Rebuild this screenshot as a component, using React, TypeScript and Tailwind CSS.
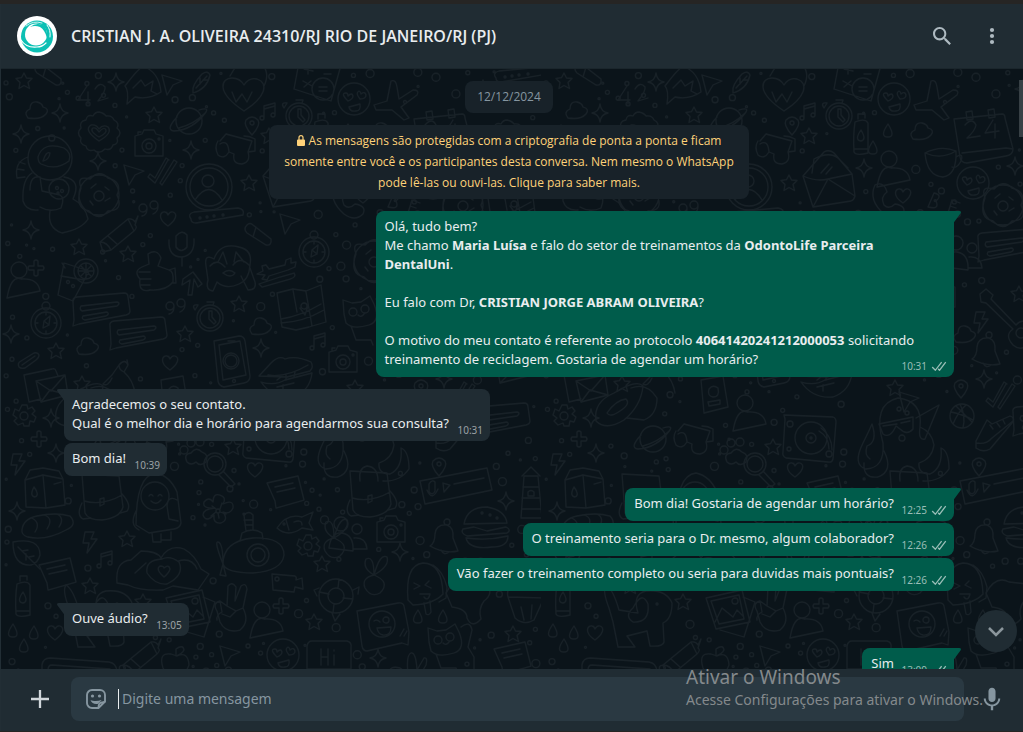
import type { ReactNode } from 'react'

// A circle as a path fragment
const c = (x: number, y: number, r: number) =>
  `M${x - r} ${y}a${r} ${r} 0 1 0 ${2 * r} 0a${r} ${r} 0 1 0 ${-2 * r} 0`

// Wallpaper drawings, each centred on 0,0
const shapes: Record<string, string> = {
  star: 'M0-8l2.500 5 5.500.5-4 4 1.500 6-5.500-3-5 3 1-6-4-4 5.500-.8z',
  sparkle: 'M0-9q1 8 8 9q-7 1-8 9q-1-8-8-9q7-1 8-9z',
  heart: 'M0 7C-12-1-7-8-3-7Q-1-7 0-4Q2-8 5-7C10-5 8 1 0 7z',
  bigHeart: 'M0 17C-30-3-22-16-12-16Q-4-16 0-9Q5-17 13-15C25-11 22 3 0 17zM-14-18Q0-44 16-32Q27-22 20-8',
  cloud: 'M-8 8Q-13 2-6-1Q-6-9 1-8Q6-7 7-3Q14-1 10 4Q5 10-8 8z',
  bolt: 'M-4-10H5L2-3H8L-2 11L0 1H-6z',
  drop: 'M0-7Q-9 6 0 6Q8 6 0-7z',
  cross: 'M-2-7Q0-9 2-7L2-2 7-2Q9 0 7 2H2V7Q0 9-2 7V2H-7Q-9 0-7-2H-2z',
  quotes: c(-5, -1, 4) + 'M-1 0Q-1 6-6 7' + c(6, -4, 4) + 'M10-3Q10 3 5 5',
  notes: 'M-5 6V-6L6-9V3M-5-3L6-6' + c(-7, 6, 2) + c(4, 3, 2),
  pin: 'M0 10Q-9 0-6-5Q0-11 6-5Q9 0 0 10z' + c(0, -2, 2),
  arrow: 'M-9-8L11-2L2 2L-4 12z',
  checks: 'M-14 5L-7 11L6-12M-14 5l2-3 5 4 11-20 3 2M-2 11L0 13 15-10 12-12z',
  pill: 'M-12-10Q-16-6-12-2L7 10Q13 11 12 4L-6-10Q-9-13-12-10zM-3-8L-6 2',
  feather: 'M-9 8Q-10 2 0-9Q6-13 8-8Q5 6-9 10zM-6 5L5-7M-2 1L-2-5M1-3L6-3',
  wing: 'M-16 18Q-14 4-18 0Q-6-16 0-20Q16-14 18 6Q6 14-8 11zM-10 2L-2-6L2 0L10-5L8 5L14 8',
  plane: 'M0-18Q5-20 6-12L8 0L22-9Q29-9 26-4L10 8L18 19L13 21L1 11L-15 11L-17 6L-4 2z' + c(14, 3, 1.5),
  planet: c(0, 0, 13) + 'M-12-4Q-24 9-15 10Q4 9 17-9Q20-14 10-11M-10 7Q5 3 15-7',
  camera: 'M-14-9L-7-11L-5-15H5L7-11L14-9V11H-14zM-11-10V-13H-8' + c(0, 1, 7) + c(0, 1, 3) + c(10, -6, 1),
  alarm: c(0, 0, 13) + c(0, 0, 10) + 'M-1-7L-1 1L4 6L6 4L2-1L2-7zM-3-16H4L3-13M-12-13L-15-8Q-19-14-12-13z',
  badge: 'M0-21Q5-20 7-17Q13-18 15-13Q21-10 18-5Q24 0 18 5Q20 11 14 12Q12 18 6 16Q0 22-5 17Q-12 19-13 13Q-20 11-18 5Q-23 0-18-5Q-20-12-13-13Q-12-19-6-17Q-4-21 0-21zM0 8Q-16-3-8-8Q-3-9 0-4Q4-9 9-6Q14 0 0 8zM0 4Q-10-2-6-5Q-3-6 0-1Q5-7 7-3Q8 0 0 4z',
  glasses: 'M-18-8Q-22-2-18 6Q-12 11-7 3L-2 5Q-4 15 6 15Q15 13 12 3L19 2V-10Q14-13 8-13M-16-5Q-8-10-7 3M12 3L16-8L-10-15L-16-8',
  bottle: 'M-6-13Q-8 0-7 17Q-5 21 7 18V-12Q4-17-6-13zM-3-16V-21H4V-17M0-5Q-7 5 0 6Q6 5 0-5zM-7 14H7',
  cup: 'M-16-9Q0-17 15-11Q16 13 2 15Q-14 14-16-9zM-16-9Q0-2 15-11M15-5Q23-10 20-1Q16 7 11 5',
  envelope: 'M-26 0L-5-24Q0-27 5-23L23-2L26 20Q25 24 22 25L-16 31zM-26 0Q-12 6-1 3L23-2M-16 31L-1 3L26 20M-17-3L-15-17Q0-25 9-18L19-8M-8-3L0-12M-3-2L3-9',
  letter: 'M-16-10L11-14L16 7L-12 14zM-16-10L3 3L11-14M-12 14L0 2L16 7',
  profile: c(0, 0, 23) + c(0, 0, 19) + c(-1, -6, 6) + 'M-14 13Q0-8 13 13',
  astronaut: c(0, -35, 22) + 'M-12-36Q-7-52 14-45Q22-40 19-32Q6-22-9-29Q-12-31-12-36zM-7-32Q-4-42 0-40Q-1-33-7-32M-18-20Q-28-14-27 8Q-24 18-12 17M-20-3Q-20-18-10-16L-8-2L10 2Q15 5 11 15Q0 20-10 14M14-16Q32-13 23 6Q35 12 38 26Q32 36 12 40Q-3 35 0 18M-22-36Q-36-31-33-15L-25-16M-31-31l6 2M-33-24l7 1' + c(9, -4, 10) + c(7, -5, 1.5) + c(12, -2, 1.5) + c(8, 0, 1),
  donut: c(0, 0, 20) + 'M-18-7Q-23-20-9-16Q0-26 9-17Q24-13 18 0Q25 16 9 16Q0 27-10 16Q-25 13-18-7zM-8-7l5-4M6-8l4 3M-9 6l3 4M6 6l5-3' + c(0, 1, 5),
  phoneCall: 'M-12-18Q-3-22 0-11Q-7-6-3 2Q2 7 8 1Q20 3 16 11Q8 19-3 11Q-19-3-12-18z',
  stick: 'M-25 2Q-29-3-22-5L22-9Q29-8 27-2L-20 6Q-25 6-25 2z' + c(-16, 1, 1) + c(-9, 0, 1) + c(-2, -1, 1) + c(7, -2, 1),
  pencil: 'M-17 17L-20 7L8-16Q13-17 15-13L18-19L15-10Q18-8 14-4L-9 15zM-20 7Q-13 7-9 15M-12 1L-3 9M8-16L14-4',
  micro: 'M-5-11V0Q0 7 6 0V-12Q1-18-5-11zM-12-7Q-13 10 1 10Q14 8 13-8M1 10V19',
  thumb: 'M-5-17Q4-23 8-13L5-5L16-1Q21 0 20 11Q13 20-3 19Q-15 22-13 8Q-20 0-11-4L-4-7zM-13 8H-2M-14 1H-3M-12 14H-3M16-1L22-3L23 12H20',
  arrowUp: 'M-4 12L-2-3L-10 2L-9-4L1-11L10 1L6 4L2-4L0 12z',
  monkey: 'M-15-11Q-9-28 10-23Q24-20 21-5Q20 10 10 14Q-3 20-12 12L-16 21Q-24 20-21 10L-23-4Q-25-17-15-11zM-19-4Q-12-12-4-3M4-5Q11-14 20-5M-11-8L-6-18L-2-6M5-8L7-18L15-8M-6 3Q0-2 6 3Q2 9-6 3M12 6L19 20Q28 20 26 12L21-2',
  wrench: 'M-19 5L-13 2L-14-3L-10-4L-7 0L9-4L10-9L15-11V-6L20-7L19-2L12 1L-7 7L-9 11L-14 10L-11 6zM-17 15L4 8L18 4Q21 8 14 10L-14 18z',
  person: c(-4, -12, 8) + 'M-16 16Q-12-7-2-3Q15-4 17 9z',
  drink: 'M-13-17L-19 15L-4 21L12-9zM-16-4L7 0M-15-17L-12-12' + c(-9, 2, 1.5) + c(-4, 6, 1.5) + c(9, -9, 12) + c(9, -9, 8) + 'M2-9H16M9-16V-2M4-14L14-4M14-14L4-4',
  map: 'M-24-15L-8-19L5-17L20-23L25 14L8 19L-5 22L-19 19zM-20 11Q0 8 20-4M-20 15Q2 14 23 2' + c(3, -2, 3) + 'M-1 0L4 7L7-2M-8-18L-4 4M5-16L11 18',
  compass: c(0, 0, 15) + c(0, 0, 11) + c(0, -17, 4) + 'M-3 5L-2-2L4-7L3 2zM-2-2L3 2M0-11V-8M0 11V8M-11 0H-8M11 0H8',
  speech: 'M-28-9Q-29-13-24-14L23-18Q27-18 27-14L29 0Q29 3 25 4L-22 13L-28 15L-27 9zM-20-5L16-9Q20-8 16-5L-19 0Q-22-2-20-5zM-18 5L6 1Q9 3 5 5L-16 9Q-20 8-18 5z',
  phone: 'M-17-20L8-25Q13-25 14-20L19 15Q19 21 13 22L-7 26Q-12 25-13 20zM-12-16L9-20L15 14L-8 19zM-3-20H4' + c(0, 0, 8) + c(0, 0, 6) + c(3, 20, 1.5),
  lips: 'M-27 5L-15-8Q-7-16-1-12Q10-16 25-9Q28-4 24 0L1 6zM-25 11Q-11 15-1 9L26 2Q24 20 7 26Q-13 28-25 11zM-18 4Q0 7 22-6M-9 9L-5 6M0 9V4M8 6L9 1M-9 16L8 12M-3 20V14',
  clip: 'M-10 7Q-12 3-8 1L5-7Q9-8 10-5Q10-2 7 0L-4 8Q-8 9-10 7zM-7 5L6-4',
  trumpet: 'M-16 11L-7 2L0-8Q6-15 9-8L5-1Q14 7 16 20M-16 11Q-11 14-7 5M9-8L8-13M0-8Q0-3 5-1',
  letters: 'M-21-11L7-17Q10-18 11-15L13-10M-21-11L-16 16L-4 13M-9-5L20-11L23 9L-4 16zM-9-5L6 5L20-11M-4 16L5 4L23 9',
  gear: 'M-2-11H3L4-7L8-9L11-5L8-2L12 1L10 6L6 5L5 10H0L-1 7L-6 9L-10 5L-7 2L-11-1L-9-7L-5-5z' + c(0, 0, 4),
  card: 'M-12-14L10-18L15 13L-9 19zM-4-5Q0-10 5-6Q7 3 0 3Q-6 2-4-5zM-5 8L7 6V10L-4 12z',
  turntable: 'M-25-21L24-19Q27-18 27-14L24 23Q23 27 19 26L-23 22Q-27 20-26 16L-24-17z' + c(2, 2, 16) + c(2, 2, 5) + c(2, 2, 1) + c(-19, -12, 3) + c(-20, 13, 2) + 'M10-5Q20 1 20 13M12-8Q23 0 23 14' + c(20, 18, 3),
  octopus: 'M-15 10Q-26-29 0-35Q25-32 22-6Q20 8 27 6L41-28L18-15M-15 10Q-13 35-32 36Q-46 32-35 10Q-29-2-26-9Q-20 9-31 13Q-34 22-28 26M22-6Q34-1 36 12Q34 26 21 30Q20 41 32 41Q45 35 43 15Q51 18 51 36Q42 49 25 48M-14 18Q-4 38-20 44Q-35 46-34 30M2 48Q0 35 9 33Q20 34 20 48M-19-9L15-16V-4Q9 3 2-4L-2-7Q-8 6-15 1zM-15-7L-1-9M3-10L12-12' + c(4, 5, 3) + c(1, -24, 2) + c(9, -20, 2),
  ball: c(0, 0, 12) + 'M-11-4Q0-2 11 4M-2-12Q4 0 1 12M-9 8Q-4-4 4-11M-6-10Q3-1 10 6',
  shoe: 'M-18 9L-7-12L-2-8L16-16Q22-14 18-9L-4 17Q-11 21-18 16zM-18 11Q-8 13-2 6L19-11M-4-7L-1-3M3-9L6-5M9-12L11-8',
  paw: 'M-9 8Q-13 0-5-1Q0-8 6-2Q13 0 10 8Q4 13 0 8Q-5 12-9 8z' + c(-12, -4, 4) + c(-5, -11, 4) + c(4, -12, 4),
  magnifier: c(0, 0, 11) + c(0, 0, 8) + 'M8 7L20 20L16 23L4 11',
  carton: 'M-16-8L2-13L22-9L24 17L5 20L-15 19zM2-13L5 20M-16-8L-11-18L2-20L18-17L22-9M13-4L20-6M-7-1Q-12 8-6 9Q-1 7-7-1z',
  bread: 'M-24 5Q-23-6-9-9Q10-13 24-9Q32 0 20 5Q0 16-18 12Q-25 10-24 5zM-14-7Q-5-2-11 7M-2-10Q8-7 1 4M11-11Q19-7 13 2',
  backpack: 'M-21-28L-18 11Q-15 18-1 18Q17 16 20 5L16-26zM-19-1Q0 4 19-7M-21 1Q-27 13-20 17L-12 16M19-8Q29 3 24 9L17 11M-3-3V4L1 2V-4z',
  penguin: 'M-20 23Q-20-27 0-29Q14-26 21-10L25 21Q24 26 18 27L-7 31zM-20 9Q-27 23-17 28M21-2Q12-7 11 4L13 17L22 19M-4 31L-3 40H5V32M5 38H15V30' + c(-1, -6, 14) + 'M-7-6Q-5-9-3-6M2-6Q4-9 6-6M-5-1Q0 4 5-2',
  flower: 'M-3-3Q-16-2-14-9Q-9-15-5-9Q-5-18 2-16Q9-14 5-7Q16-12 15-3Q12 4 5 1Q11 9 3 12Q-5 13-4 4Q-12 12-15 4Q-15-2-3-3z' + c(0, 0, 2) + 'M-2-2L-6-5M2-2L4-8M2 1L8 3M0 2L1 7M-2 1L-7 5',
  note: 'M-18-9L13-16L19 8L-9 16L-10 9zM-10-5L8-9M-8 0L10-4',
  fish: 'M-17 5Q-7-10 8-6L19-11L15 0L19 7L8 5Q-6 15-17 5zM-8-3L-5 7' + c(-10, 1, 1) + 'M0-1Q8-4 8 2',
  submarine: 'M-30 9Q-30-14 0-17Q31-18 31 0Q29 16 0 18Q-27 18-30 9zM-13-14L-11-22Q0-28 9-22L10-16M-7-24L-9-40Q-4-45 0-40V-25M-9-35H0M-8-30H0' + c(5, 0, 11) + c(5, 0, 7) + 'M-30 9Q-39-14-35-13Q-30-12-30 9M-30 9L-33 20L-27 21z',
  sprout: 'M0 2Q-12-5-8-14Q0-18 0 2Q6-20 13-16Q16-7 0 2M0 2Q-13 5-9 15Q-3 25 6 20Q17 9 0 2z',
  voice: 'M-36-8L31-21L36 1L-31 15zM-27-5V3Q-23 7-21 2V-7Q-24-10-27-5zM-29 1Q-24 13-18 0M-13-6L-6-4L-12 3zM-2-5L28-11',
  bell: 'M-14 8Q-9 5-9-4Q-8-14 3-13Q10-11 9 0L14 13Q0 16-14 8zM-3 12Q0 18 5 14' + c(3, -16, 3),
  burger: 'M-23-4Q-20-21 0-21Q18-18 20-5zM-24 1L-13-1L0 3L19-1Q25 2 20 5L-20 8Q-27 5-24 1zM-21 10Q0 13 21 8Q21 19 5 19Q-18 22-21 10' + c(-5, -15, 1) + c(3, -13, 1) + c(10, -10, 1),
  lighthouse: 'M-10 21L-7-21H7L11 21zM-8-10H7M-9 1H9M-9 12H10M-3-1V-5Q0-8 3-5V-1zM-9-21L0-30L9-21',
  leaf: 'M-13-12Q14-17 14 1Q12 9 5 11Q-13 12-13-12zM-8-7L14 15M-4-3L2-4M0 0L0 6M3 3L8 2',
  hands: 'M-47 18Q-49-4-33-5L-23-14Q-7-14-3-7Q5-21 20-16Q31-10 37 4L45 9L34 25L9 21L-1 25Q-24 26-36 20zM-2-6Q-19-5-17 8Q-9 20 3 19Q21 10 15-3Q6-10-2-6M-18-2L-29 8M14-4Q28-8 33 4M0 12Q-9 4-4 1Q0 1 0 3Q5-1 6 4Q5 8 0 12z',
  icepop: 'M-17 13Q-20-22-2-24Q17-24 18 7Q9 17-12 18zM8-22Q18-16 22 0L21 11L14 15M-1 16L1 27Q4 29 6 25L5 14M-11-4L-5-1L-11 2M4-6L0-2L6 1M-5 7H5Q3 15-1 10',
  blanket: 'M-23-8Q-13-26 0-19L18-17Q25-7 15 0Q9 8 12 18Q3 28-2 17Q-2 8-17 6z',
  cupcake: 'M-18-7L-11 14Q-2 22 8 16L18-6zM-18-7Q-21-20-5-20Q8-29 16-16Q24-9 18-6M-5 3L-2 16M6 1L5 15',
  victory: 'M-14 3Q-19-5-11-7L-4-2L-3-22Q1-27 5-21L4-7L10-22Q15-26 16-19L12 0Q19 14 9 22Q-5 26-11 14zM-11-7L-9 4Q-15 7-14 12M-4-2L5 3L-1 9L-9 6M5 3L12 0',
  video: 'M-15-10L8-8Q10-7 9-4L15-6L16 5L8 3L7 8L-14 6z' + c(-10, -5, 2),
  float: c(0, 0, 17) + c(0, 0, 8) + 'M-17-4L-7-2M17 3L7 2M-3 17L-2 8M3-17L2-8M-17-8L-22-6L-19 0M17-6L23-9L22-2M-4 17L-1 25L4 18',
  picture: 'M-24-11L12-19L20 13L-14 20zM-19-8L9-14L14 10L-11 15zM-15 13L-8-1L3 8L7 1L13 7M13-12L25-7L14 28L-10 21' + c(5, -8, 3),
  squareFace: 'M-26-13L15-21Q20-22 21-18L26 8L25 21L19 19L-16 27Q-20 27-21 22z' + c(-1, 0, 13) + c(3, -4, 3) + 'M-9-3Q-6-5-3-2M-6 4L8 3Q8 12 0 11Q-5 10-6 4M17 12L21 5M21 12L24 7',
  cat: 'M-17-2L-18-16L-9-13L0-14L9-20L13-12Q20 5 8 9Q-8 14-15 7zM15-17Q24-24 26-14L22 3L28 13V29M-10 10L-5 24H10L12 29' + c(-8, -4, 4) + c(4, -7, 4) + 'M-3-1Q0 2 3-2',
  face: c(0, 0, 16) + 'M-6 2Q-14-6-8-6Q-6-6-6-3Q-2-7-1-3Q-1 0-6 2M6 0Q1-6 5-8Q7-7 7-5Q11-8 12-4Q12 0 6 0M-5 8L6 5Q7 12 2 12Q-4 13-5 8z',
  hi: 'M-22-9Q-21-14-17-14H18Q23-13 22-7V14H-22z',
  fingers: 'M-27 12Q-27 3-16 6L-8 12Q-10-7-5-9Q0-10 1 8L8-4Q12-5 10 3L3 15',
  apple: 'M-12 7Q-17-9-4-7L2-5Q13-10 14 4Q9 17 2 14Q-8 16-12 7zM1-5L1-12Q8-17 9-11Q7-7 1-5',
  crate: 'M-37 10V-3Q-36-10-29-10L30-6Q37-5 38 3V10M-31 10V2Q-31-3-27-3L31 1V10',
  dog: 'M-34-4Q-41-22-37-27Q-30-23-24-2L-5 1Q-11-18 3-21Q23-23 29-9Q29 7 20 11L21 30Q20 35 7 34L4 19L-16 24L-8 35H-25L-30 10zM-10-4Q-19 4-10 10Q7 11 5-8Q-1-22-10-4' + c(14, -8, 1),
  calendar: 'M-27-14L21-19Q24-19 24-15L32 16Q32 22 25 23L-14 30Q-20 30-21 24zM-19 20L25 15L32 16M-15-21L-9-22L-8-14L-14-13zM7-23L13-24L14-16L8-15z',
  pad: 'M-16-22L25-14L15 22L-22 10zM-12-10L-3-8M-8-14L-8-5M-13 2L-4 7M-5 2L-12 8M8-5H15' + c(7, 10, 11) + 'M3 8H11M3 12H11',
  guitar: 'M-21-22L-15-27L-8-21L-10-17L15 9Q21 2 28 8L32 25Q21 37 12 29Q3 19 12 13L-15-13L-20-14z' + c(20, 17, 5),
  folks: c(-8, -12, 7) + c(8, -7, 5) + 'M-20 12Q-18-4-7-3Q5-1 4 15zM5 2Q17 1 18 13H4',
  ufo: 'M-28 15Q-31-4-10-13Q13-27 19-20Q17 0 0 14Q-18 25-28 15zM-17 7Q-8-6 2-7Q7-2-4 5Q-14 12-17 7zM7-18Q23-24 33-8Q33 9 20 14L3 12',
}

type Doodle = [name: string, x: number, y: number, room?: number]

const doodles: Doodle[] = [
  ['star', 23, 80], ['pill', 48, 74], ['sparkle', 115, 81], ['wing', 142, 85, 24], ['arrow', 170, 82], ['feather', 201, 82],
  ['bigHeart', 243, 93, 28], ['pad', 315, 78, 28], ['face', 353, 98, 20], ['plane', 390, 98, 28], ['calendar', 440, 132, 36],
  ['sparkle', 482, 88], ['stick', 520, 75, 20], ['cloud', 35, 109], ['sparkle', 59, 112], ['badge', 98, 132, 26], ['star', 153, 114],
  ['planet', 188, 120, 20], ['camera', 148, 144, 20], ['sparkle', 190, 149], ['notes', 268, 111], ['alarm', 298, 115, 20], ['pin', 251, 124],
  ['glasses', 235, 148, 24], ['star', 268, 135], ['bottle', 320, 134, 20], ['drop', 347, 130], ['drop', 332, 147], ['cloud', 380, 130],
  ['cup', 400, 161, 22], ['sparkle', 20, 133], ['sparkle', 97, 160], ['astronaut', 49, 192, 48], ['donut', 98, 194, 26], ['arrow', 132, 172],
  ['checks', 161, 171, 18], ['profile', 208, 186, 26], ['star', 248, 182], ['envelope', 288, 175, 34], ['sparkle', 323, 167],
  ['person', 352, 170, 18], ['phoneCall', 346, 202, 20], ['heart', 362, 195], ['face', 432, 182, 20], ['donut', 462, 204, 24],
  ['sparkle', 474, 165], ['quotes', 147, 208], ['heart', 167, 218], ['pencil', 119, 234, 22], ['stick', 215, 216, 28], ['arrow', 288, 221],
  ['pill', 258, 234], ['sparkle', 30, 229], ['badge', 506, 140, 26], ['map', 510, 205, 28], ['speech', 465, 246, 28], ['folks', 423, 254, 20],
  ['micro', 180, 246, 20], ['thumb', 152, 270, 25], ['arrowUp', 191, 282], ['monkey', 228, 269, 28], ['compass', 313, 251, 20],
  ['wrench', 275, 268, 22], ['person', 22, 281, 20], ['cross', 35, 267], ['drink', 76, 279, 25], ['map', 300, 307, 28], ['star', 78, 246],
  ['star', 127, 253], ['guitar', 460, 315, 34], ['bolt', 439, 321], ['bell', 445, 350, 18], ['cloud', 423, 333], ['star', 478, 293],
  ['donut', 373, 260, 24], ['cat', 360, 315, 26], ['drink', 510, 290, 28], ['camera', 400, 295, 20], ['compass', 45, 322, 20],
  ['speech', 100, 310, 30], ['speech', 137, 334, 32], ['quotes', 174, 306], ['star', 238, 303], ['alarm', 209, 317, 20],
  ['cloud', 259, 325], ['star', 184, 333], ['phone', 230, 360, 28], ['lips', 285, 370, 32], ['sparkle', 260, 347], ['sparkle', 10, 333],
  ['cloud', 86, 345], ['star', 55, 350], ['clip', 28, 359], ['heart', 169, 362], ['trumpet', 118, 372, 20], ['letters', 44, 385, 26],
  ['star', 81, 383], ['gear', 23, 415], ['sparkle', 50, 417], ['notes', 318, 341], ['camera', 342, 360, 20], ['card', 172, 393, 20],
  ['ufo', 83, 405, 36], ['person', 208, 414, 20], ['turntable', 268, 435, 32], ['octopus', 357, 432, 54], ['ball', 421, 415, 16],
  ['pin', 420, 387], ['checks', 459, 395, 18], ['arrow', 367, 399], ['shoe', 453, 431, 22], ['star', 354, 387], ['sparkle', 443, 378],
  ['pin', 438, 465], ['glasses', 153, 438, 24], ['letter', 511, 368, 20], ['speech', 500, 420, 30], ['planet', 112, 438, 20],
  ['cross', 38, 438], ['bolt', 16, 463], ['sparkle', 55, 452], ['paw', 195, 453], ['magnifier', 214, 463, 16], ['carton', 40, 487, 26],
  ['bread', 45, 524, 28], ['backpack', 102, 501, 28], ['penguin', 155, 501, 34], ['flower', 217, 510, 18], ['note', 284, 491, 20],
  ['fish', 293, 522, 20], ['submarine', 252, 554, 40], ['gear', 307, 545], ['sprout', 333, 535], ['heart', 254, 469],
  ['star', 232, 446], ['voice', 455, 488, 38], ['camera', 390, 530, 20], ['bell', 443, 537, 20], ['burger', 486, 527, 26],
  ['sparkle', 505, 500], ['lighthouse', 530, 496, 24], ['folks', 348, 535, 20], ['backpack', 370, 498, 28], ['leaf', 25, 553, 18],
  ['sparkle', 16, 510], ['bolt', 88, 541], ['star', 126, 538], ['notes', 105, 559], ['hands', 163, 564, 48], ['note', 56, 573, 20],
  ['bottle', 22, 596, 22], ['star', 89, 585], ['dog', 102, 611, 40], ['sprout', 373, 572, 20], ['sparkle', 399, 551],
  ['icepop', 424, 586, 28], ['blanket', 468, 600, 26], ['cupcake', 525, 603, 24], ['victory', 230, 607, 24], ['person', 265, 621, 20],
  ['cross', 280, 605], ['video', 286, 583, 18], ['float', 335, 595, 24], ['star', 313, 621], ['star', 321, 563], ['picture', 189, 608, 32],
  ['star', 142, 601], ['squareFace', 382, 623, 30], ['drop', 417, 616], ['drop', 442, 616], ['cat', 445, 643, 26], ['star', 512, 633],
  ['note', 511, 657, 20], ['heart', 54, 632], ['drop', 12, 630], ['drop', 33, 632], ['drop', 23, 645], ['face', 282, 654, 20],
  ['hi', 328, 654, 24], ['sparkle', 377, 657], ['fingers', 415, 661, 24], ['pencil', 142, 657, 20], ['apple', 174, 660, 16],
  ['arrow', 228, 653], ['crate', 78, 667, 36],
]

const TILE_W = 540
const TILE_H = 700

// Small rings in the room that the drawings leave free
function scatterRings() {
  let seed = 7
  const random = () => {
    seed = (seed * 16807) % 2147483647
    return seed / 2147483647
  }
  const rings: number[][] = []
  for (let i = 0; i < 2600; i++) {
    const x = 5 + random() * (TILE_W - 10)
    const y = 70 + random() * (TILE_H - 80)
    const r = [1, 2, 2, 3, 4][Math.floor(random() * 5)]
    const free =
      doodles.every(([, dx, dy, room = 13]) => Math.hypot(dx - x, dy - y) > room + r) &&
      rings.every(([rx, ry, rr]) => Math.hypot(rx - x, ry - y) > rr + r + 6)
    if (free) rings.push([x, y, r])
  }
  return rings
}

const rings = scatterRings()

function Wallpaper() {
  return (
    <svg aria-hidden="true" className="absolute inset-0 h-full w-full" fill="none">
      <defs>
        <pattern id="doodles" y={-68} width={TILE_W} height={TILE_H} patternUnits="userSpaceOnUse">
          <g stroke="#182127" strokeWidth="1.300" strokeLinejoin="round" strokeLinecap="round">
            {doodles.map(([name, x, y], i) => (
              <path key={i} d={shapes[name]} transform={`translate(${x} ${y})`} />
            ))}
            {rings.map(([x, y, r], i) => (
              <circle key={i} cx={x} cy={y} r={r} />
            ))}
            {/* 42, W, 24, BFF and Hi */}
            <path d="M86 85l-9 14h12M87 91v12M94 88q5-8 10-2q1 4-7 14l10-3M231 91l4 10 6-8 5 8 5-10M424 124q7-8 11 0q-1 6-9 13l13-2M452 119l-8 13 14-2M454 123v14M393 192l-6 14q12 3 8-6q7-6-2-8M407 212l4-13 8 3M409 205l6 2M320 648v16M327 648v16M320 656h7M333 654v10M333 649v1" />
          </g>
        </pattern>
      </defs>
      <rect width="100%" height="100%" fill="url(#doodles)" />
    </svg>
  )
}

function DoubleCheck() {
  return (
    <svg viewBox="0 0 16 15" className="h-[15px] w-4" fill="currentColor" aria-hidden="true">
      <path d="M15.010 3.316l-.478-.372a.365.365 0 0 0-.51.063L8.666 9.879a.32.32 0 0 1-.484.033l-.358-.325a.319.319 0 0 0-.484.032l-.378.483a.418.418 0 0 0 .036.541l1.320 1.266c.143.14.361.125.484-.033l6.272-8.048a.366.366 0 0 0-.064-.512zm-4.100 0l-.478-.372a.365.365 0 0 0-.51.063L4.566 9.879a.32.32 0 0 1-.484.033L1.891 7.769a.366.366 0 0 0-.515.006l-.423.433a.364.364 0 0 0 .006.514l3.258 3.185c.143.14.361.125.484-.033l6.272-8.048a.365.365 0 0 0-.063-.51z" />
    </svg>
  )
}

interface BubbleProps {
  time: string
  out?: boolean
  first?: boolean
  children: ReactNode
}

function Bubble({ time, out, first, children }: BubbleProps) {
  return (
    <div className={`flex ${out ? 'justify-end' : 'justify-start'} ${first ? 'mt-3' : 'mt-0.5'}`}>
      <div
        className={`relative max-w-[65%] rounded-lg pt-1.5 pr-[7px] pb-[3px] ${
          out ? 'bg-[#005c4b] pl-[9px]' : 'bg-[#202c33] pl-2'
        } ${first ? (out ? 'rounded-tr-none' : 'rounded-tl-none') : ''}`}
      >
        {first && (
          <svg
            viewBox="0 0 8 13"
            aria-hidden="true"
            className={`absolute top-0 h-[13px] w-2 ${out ? 'left-full text-[#005c4b]' : 'right-full text-[#202c33]'}`}
            fill="currentColor"
          >
            <path
              d={
                out
                  ? 'M5.188 0H0v11.193l6.467-8.625C7.526 1.156 6.958 0 5.188 0z'
                  : 'M1.533 2.568L8 11.193V0H2.812C1.042 0 .474 1.156 1.533 2.568z'
              }
            />
          </svg>
        )}
        <div className="text-[13px] leading-[19px] text-[#e9edef]">
          {children}
          <span className={`inline-block ${out ? 'w-[53px]' : 'w-[34px]'}`} />
        </div>
        <div
          className={`-mt-2.5 flex justify-end gap-1 text-[10px] leading-[15px] ${
            out ? 'text-[#99beb7]' : 'text-[#9ba1a5]'
          }`}
        >
          <span>{time}</span>
          {out && <DoubleCheck />}
        </div>
      </div>
    </div>
  )
}

function Header() {
  return (
    <header className="flex h-16 shrink-0 items-center bg-[#202c33] px-4">
      <svg viewBox="0 0 40 40" className="h-10 w-10" aria-hidden="true">
        <circle cx="20" cy="20" r="20" fill="#fff" />
        <circle cx="20" cy="20.500" r="16" fill="#0cc0b4" />
        <circle cx="19" cy="18.500" r="11" fill="#fff" />
        <path d="M13 11Q19 6 26 9Q31 13 30 22Q28 14 23 11Q18 9 13 11z" fill="#0cc0b4" />
        <g fill="none" stroke="#fff" strokeLinecap="round">
          <path d="M30 9Q34 14 33 21" strokeWidth="1" />
          <path d="M4 24Q9 32 20 31Q25 31 29 27" strokeWidth="1.200" />
          <path d="M9 10Q16 4 25 7" strokeWidth="0.800" />
        </g>
      </svg>
      <h1 className="ml-[14px] min-w-0 flex-1 truncate font-['Open_Sans','Noto_Sans',sans-serif] text-base font-semibold text-[#e9edef]">
        CRISTIAN J. A. OLIVEIRA 24310/RJ RIO DE JANEIRO/RJ (PJ)
      </h1>
      <div className="flex gap-[26px] pr-[3px] text-[#aebac1]">
        <button type="button" aria-label="Pesquisar">
          <svg viewBox="0 0 24 24" className="h-6 w-6" fill="currentColor">
            <path d="M15.900 14.300H15l-.3-.3c1-1.100 1.600-2.700 1.600-4.300 0-3.700-3-6.700-6.700-6.700S3 6 3 9.700s3 6.700 6.700 6.700c1.600 0 3.200-.6 4.300-1.600l.3.300v.8l5.100 5.100 1.500-1.500-5-5.200zm-6.200 0c-2.600 0-4.600-2.100-4.600-4.600s2.100-4.600 4.600-4.600 4.600 2.100 4.600 4.600-2 4.600-4.600 4.600z" />
          </svg>
        </button>
        <button type="button" aria-label="Menu">
          <svg viewBox="0 0 24 24" className="h-6 w-6" fill="currentColor">
            <circle cx="12" cy="6" r="2.100" />
            <circle cx="12" cy="12" r="2.100" />
            <circle cx="12" cy="18" r="2.100" />
          </svg>
        </button>
      </div>
    </header>
  )
}

function Composer() {
  return (
    <footer className="relative flex h-[62px] shrink-0 items-center bg-[#202c33] pt-0 pr-[19px] pb-0.5 pl-[27px]">
      <button type="button" aria-label="Anexar" className="text-[#d1d7db]">
        <svg viewBox="0 0 24 24" className="h-6 w-6" stroke="currentColor" strokeWidth="2.300">
          <path d="M12 3v18M3 12h18" />
        </svg>
      </button>
      <div className="ml-[19px] flex h-11 flex-1 items-center rounded-lg bg-[#2a3942] pl-[13px]">
        <button type="button" aria-label="Figurinhas" className="text-[#8696a0]">
          <svg viewBox="0 0 24 24" className="h-6 w-6" fill="none" stroke="currentColor" strokeWidth="1.900">
            <path d="M8 3h8a5 5 0 0 1 5 5v6.500L14.500 21H8a5 5 0 0 1-5-5V8a5 5 0 0 1 5-5z" />
            <path d="M14.500 21c.3-3-.1-4.600 2-5.200 1.500-.4 3-.3 4.500-1.300" />
            <path d="M6.500 13c2.500 1.300 7.500 1.300 11 0-.6 1.600-2.300 1.800-3.300 3.800-3.500.9-6.700-.7-7.700-3.800z" fill="currentColor" stroke="none" />
            <circle cx="8.500" cy="9" r="1.600" fill="currentColor" stroke="none" />
            <circle cx="15.500" cy="9" r="1.600" fill="currentColor" stroke="none" />
          </svg>
        </button>
        <span className="ml-[10px] h-5 w-px bg-[#e9edef]" />
        <input
          type="text"
          aria-label="Digite uma mensagem"
          placeholder="Digite uma mensagem"
          className="ml-[3px] min-w-0 flex-1 bg-transparent text-sm leading-5 text-[#e9edef] outline-none placeholder:text-[#8696a0]"
        />
      </div>
      <button type="button" aria-label="Gravar áudio" className="ml-4 text-[#8696a0]">
        <svg viewBox="0 0 24 24" className="h-6 w-6" fill="currentColor">
          <path d="M12 14.942c2 0 3.531-1.530 3.531-3.531V4.350C15.531 2.350 14 .819 12 .819S8.469 2.350 8.469 4.350v7.061c0 2 1.530 3.531 3.531 3.531zm6.237-3.530c0 3.531-2.942 6.002-6.237 6.002s-6.237-2.471-6.237-6.002H3.761c0 4 3.178 7.297 7.061 7.885v3.884h2.354v-3.884c3.884-.588 7.061-3.884 7.061-7.885h-2z" />
        </svg>
      </button>
      <div className="pointer-events-none absolute right-[40px] -top-1 text-[#84898c]">
        <p className="text-[19px] leading-6">Ativar o Windows</p>
        <p className="text-sm leading-[22px]">Acesse Configurações para ativar o Windows.</p>
      </div>
    </footer>
  )
}

export default function App() {
  return (
    <div className="flex h-screen flex-col border-t-4 border-b border-[#262524] bg-[#0b141a] font-['Noto_Sans','Open_Sans',sans-serif]">
      <div className="flex min-h-0 flex-1 flex-col border-l border-[#222e35]">
        <Header />
        <main className="relative min-h-0 flex-1 overflow-hidden border-t border-[#1b262c]">
          <Wallpaper />
          <div className="relative flex flex-col pt-3 pr-[69px] pl-[63px]">
            <div className="flex flex-col items-center gap-3 font-['Open_Sans','Noto_Sans',sans-serif]">
              <div className="rounded-lg bg-[#182229] px-3 py-1.5 text-xs leading-5 text-[#8696a0]">12/12/2024</div>
              <button
                type="button"
                className="w-[480px] max-w-full rounded-lg bg-[#182229] px-3 pt-[5px] pb-1.5 text-xs leading-[21px] text-[#ffd279]"
              >
                <svg viewBox="0 0 8 11" className="mr-1 inline h-[11px] w-2 align-[-1px]" fill="currentColor" aria-hidden="true">
                  <path d="M4 0a2.600 2.600 0 0 0-2.600 2.600v2H1a1 1 0 0 0-1 1V10a1 1 0 0 0 1 1h6a1 1 0 0 0 1-1V5.600a1 1 0 0 0-1-1h-.4v-2A2.600 2.600 0 0 0 4 0zM2.600 4.600v-2a1.400 1.400 0 0 1 2.800 0v2z" />
                </svg>
                As mensagens são protegidas com a criptografia de ponta a ponta e ficam somente entre você e os
                participantes desta conversa. Nem mesmo o WhatsApp pode lê-las ou ouvi-las. Clique para saber mais.
              </button>
            </div>

            <Bubble out first time="10:31">
              Olá, tudo bem?
              <br />
              Me chamo <strong>Maria Luísa</strong> e falo do setor de treinamentos da{' '}
              <strong>OdontoLife Parceira</strong>
              <br />
              <strong>DentalUni</strong>.
              <br />
              <br />
              Eu falo com Dr, <strong>CRISTIAN JORGE ABRAM OLIVEIRA</strong>?
              <br />
              <br />O motivo do meu contato é referente ao protocolo <strong>40641420241212000053</strong> solicitando
              treinamento de reciclagem. Gostaria de agendar um horário?
            </Bubble>
            <Bubble first time="10:31">
              Agradecemos o seu contato.
              <br />
              Qual é o melhor dia e horário para agendarmos sua consulta?
            </Bubble>
            <Bubble time="10:39">Bom dia!</Bubble>
            <Bubble out first time="12:25">
              Bom dia! Gostaria de agendar um horário?
            </Bubble>
            <Bubble out time="12:26">
              O treinamento seria para o Dr. mesmo, algum colaborador?
            </Bubble>
            <Bubble out time="12:26">
              Vão fazer o treinamento completo ou seria para duvidas mais pontuais?
            </Bubble>
            <Bubble first time="13:05">Ouve áudio?</Bubble>
            <Bubble out first time="13:09">
              Sim
            </Bubble>
          </div>

          {/* Scrollbar */}
          <div className="absolute top-[11px] right-0 h-[57px] w-1 bg-[#374045]" />

          <button
            type="button"
            aria-label="Ir para o fim"
            className="absolute right-1.5 bottom-[17px] flex h-[42px] w-[42px] items-center justify-center rounded-full bg-[#202c33] text-[#8b969c]"
          >
            <svg viewBox="0 0 20 20" className="mt-0.5 h-5 w-5" fill="none" stroke="currentColor" strokeWidth="2.500">
              <path d="M3 6l7 7 7-7" />
            </svg>
          </button>
        </main>
        <Composer />
      </div>
    </div>
  )
}
